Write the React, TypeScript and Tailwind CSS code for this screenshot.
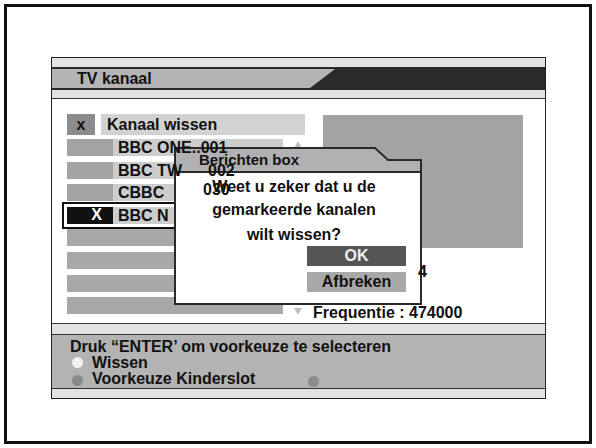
import React from 'react';

type Row = {
  label?: string;
  over?: boolean;
  selected?: boolean;
  num?: string;
  numPos?: string;
};

const rows: Row[] = [
  { label: 'BBC ONE..001', over: true },
  { label: 'BBC TW', over: true, num: '002', numPos: 'left-[95px] top-0' },
  { label: 'CBBC', over: true, num: '030', numPos: 'left-[90px] -top-[3px]' },
  { label: 'BBC N', selected: true },
  {},
  {},
  {},
  {},
];

const ChannelRow: React.FC<{ row: Row }> = ({ row }) => {
  if (!row.label) return <div className="h-[17px] w-[216px] bg-[#a8a8a8]" />;

  return (
    <div
      className={`flex h-[17px] w-[216px] ${
        row.selected ? 'outline-2 outline-offset-[3px] outline-[#111]' : ''
      }`}
    >
      <div
        className={`flex w-[46px] items-center justify-end pr-[11px] ${
          row.selected ? 'bg-[#111]' : 'bg-[#a3a3a3]'
        }`}
      >
        {row.selected && <span className="text-[16px] leading-none text-white">X</span>}
      </div>
      <div className="relative flex-1 bg-[#cdcdcd] pl-[5px] leading-[17px]">
        <span className={row.over ? 'relative z-20' : ''}>{row.label}</span>
        {row.num && <span className={`absolute z-20 ${row.numPos}`}>{row.num}</span>}
      </div>
    </div>
  );
};

export default function App() {
  return (
    <div className="h-[448px] w-[596px] bg-white p-[4px] font-['Liberation_Sans',Arial,sans-serif] text-[16px] font-bold text-[#111]">
      <div className="h-full border-[3px] border-[#111] pl-[44px] pt-[50px]">
        {/* Menu panel */}
        <div className="relative w-[495px] border border-[#222]">
          <div className="h-[9px] bg-[#e3e3e3]" />

          {/* Title bar */}
          <div className="h-[23px] border-y-2 border-[#2a2a2a] bg-[#2a2a2a]">
            <div className="flex h-full w-[283px] items-center bg-[#b4b4b4] pl-[25px] [clip-path:polygon(0_0,100%_0,calc(100%-25px)_100%,0_100%)]">
              TV kanaal
            </div>
          </div>

          <div className="h-[9px] border-b border-[#333] bg-[#e3e3e3]" />

          {/* Content */}
          <div className="flex h-[224px] bg-white pl-[15px] pt-[15px]">
            {/* Channel list */}
            <div className="flex w-[238px] flex-col">
              <div className="flex h-[21px]">
                <div className="flex w-[28px] items-center justify-center bg-[#8c8c8c] text-[16px] leading-none">
                  x
                </div>
                <div className="ml-[6px] flex-1 bg-[#d2d2d2] pl-[6px] leading-[21px]">Kanaal wissen</div>
              </div>
              <div className="mt-[4px] flex">
                <div className="flex flex-col gap-[5.6px]">
                  {rows.map((row, i) => (
                    <ChannelRow key={i} row={row} />
                  ))}
                </div>
                <div className="ml-[11px] flex h-[176px] w-[8px] flex-col justify-between pt-[2px]">
                  <div className="h-0 w-0 border-x-[4px] border-b-[7px] border-x-transparent border-b-[#bdbdbd]" />
                  <div className="h-0 w-0 border-x-[4px] border-t-[7px] border-x-transparent border-t-[#bdbdbd]" />
                </div>
              </div>
            </div>

            {/* Preview + info */}
            <div className="ml-[8px] flex flex-col">
              <div className="ml-[10px] mt-px h-[133px] w-[200px] bg-[#a3a3a3]" />
              <div className="mt-[15px] h-[18px] pl-[105px] leading-[18px]">
                <span className="relative z-20">4</span>
              </div>
              <div className="mt-[23px] leading-[17px]">Frequentie : 474000</div>
            </div>
          </div>

          <div className="h-[12px] border-y border-[#333] bg-[#e3e3e3]" />

          {/* Hint bar */}
          <div className="h-[54px] border-b border-[#333] bg-[#b3b3b3] pl-[18px] pt-[3px]">
            <div className="h-[17px] leading-[17px]">Druk “ENTER’ om voorkeuze te selecteren</div>
            <div className="flex h-[15.5px] items-center">
              <span className="ml-[2px] h-[11px] w-[11px] rounded-full bg-[#f2f2f2]" />
              <span className="ml-[9px] leading-[15px]">Wissen</span>
            </div>
            <div className="flex h-[15.5px] items-center">
              <span className="ml-[2px] mt-[4px] h-[11px] w-[11px] rounded-full bg-[#8a8a8a]" />
              <span className="ml-[9px] leading-[15px]">Voorkeuze Kinderslot</span>
              <span className="ml-[53px] mt-[6px] h-[11px] w-[11px] rounded-full bg-[#8a8a8a]" />
            </div>
          </div>

          <div className="h-[9px] bg-[#e3e3e3]" />

          {/* Message box */}
          <div className="absolute left-[122px] top-[89px] z-10 w-[248px]">
            <div className="relative h-[25px]">
              <svg className="absolute inset-0" width="248" height="26" viewBox="0 0 248 26">
                <path d="M1 25V1H201L214 13H247V25Z" fill="#b1b1b1" stroke="#2a2a2a" strokeWidth="2" />
              </svg>
              <div className="relative pl-[25px] pt-[4px] text-[15px] leading-[18px]">Berichten box</div>
            </div>
            <div className="flex h-[133px] flex-col border-x-2 border-b-2 border-[#2a2a2a] bg-white">
              <div className="pr-[8px] pt-[5px] text-center leading-[20px]">
                <div>Weet u zeker dat u de</div>
                <div className="mt-[3px]">gemarkeerde kanalen</div>
                <div className="mt-[5px]">wilt wissen?</div>
              </div>
              <div className="mr-[14px] mt-px flex h-[20px] w-[99px] items-center justify-center self-end bg-[#555] text-[#eee]">
                OK
              </div>
              <div className="mr-[14px] mt-[6px] flex h-[20px] w-[99px] items-center justify-center self-end bg-[#a9a9a9]">
                Afbreken
              </div>
            </div>
          </div>
        </div>
      </div>
    </div>
  );
}
